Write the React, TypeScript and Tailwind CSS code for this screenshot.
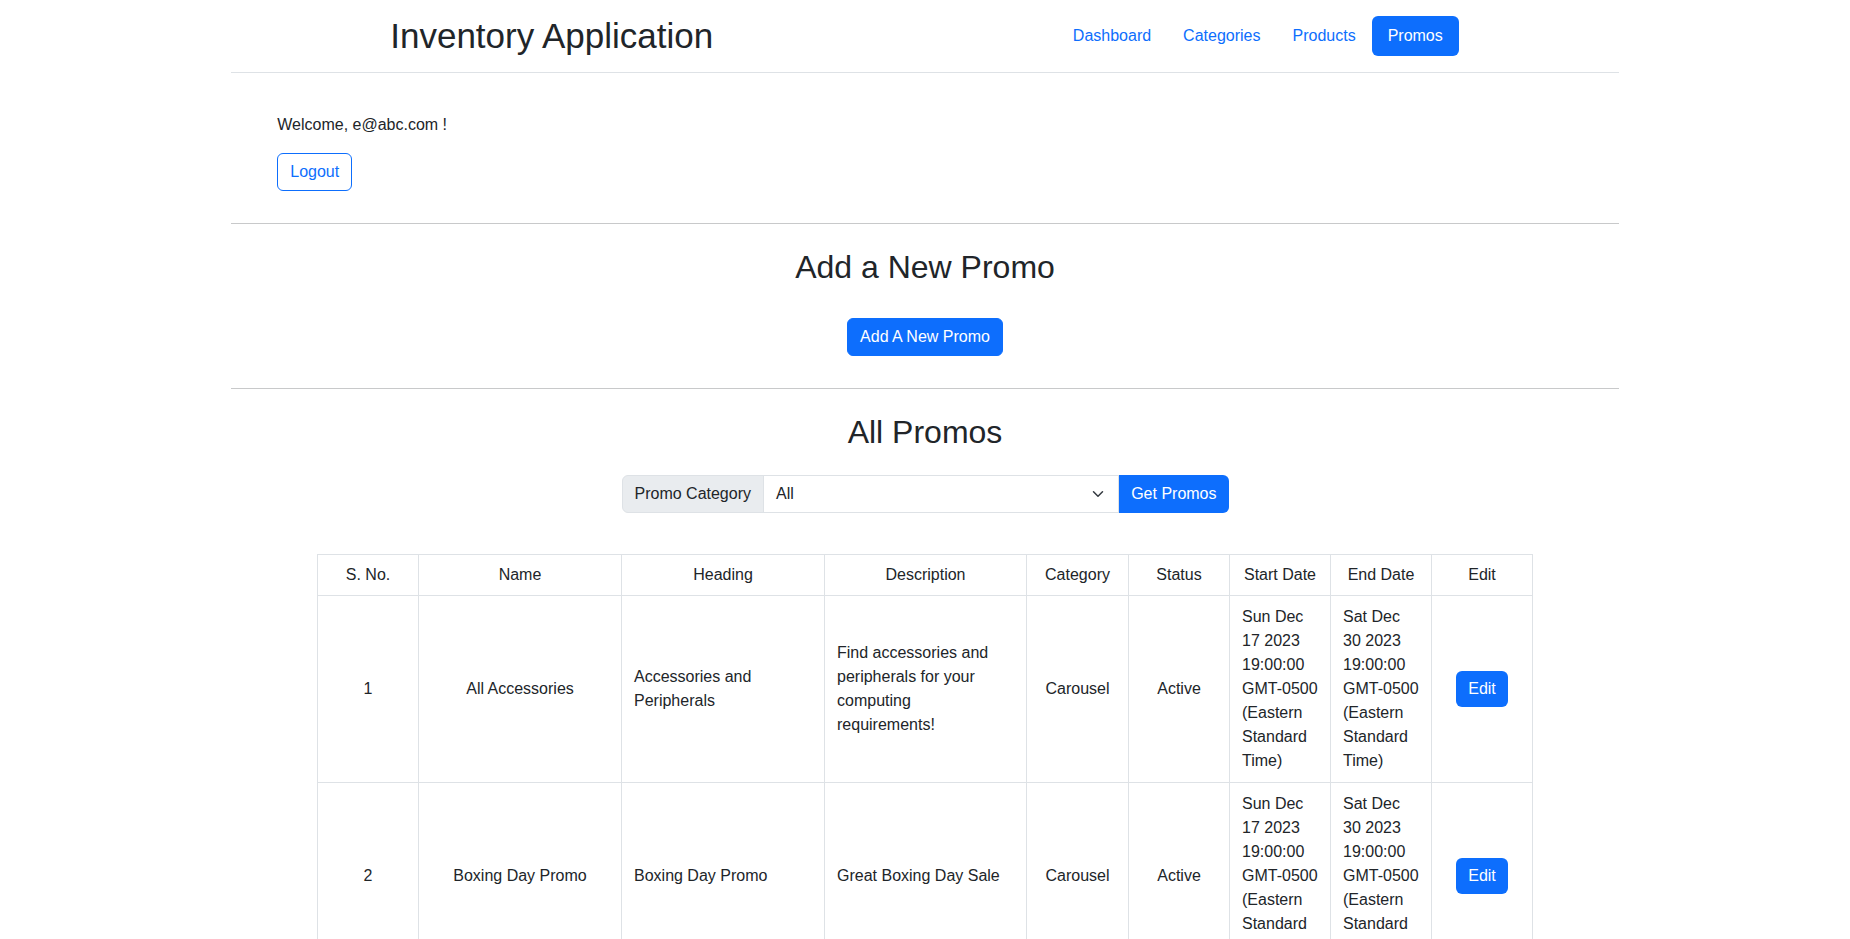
const NAV_LINKS = ["Dashboard", "Categories", "Products", "Promos"];

type Promo = {
  id: number;
  name: string;
  heading: string[];
  description: string[];
  category: string;
  status: string;
  start: string[];
  end: string[];
};

const PROMOS: Promo[] = [
  {
    id: 1,
    name: "All Accessories",
    heading: ["Accessories and", "Peripherals"],
    description: ["Find accessories and", "peripherals for your", "computing", "requirements!"],
    category: "Carousel",
    status: "Active",
    start: ["Sun Dec", "17 2023", "19:00:00", "GMT-0500", "(Eastern", "Standard", "Time)"],
    end: ["Sat Dec", "30 2023", "19:00:00", "GMT-0500", "(Eastern", "Standard", "Time)"],
  },
  {
    id: 2,
    name: "Boxing Day Promo",
    heading: ["Boxing Day Promo"],
    description: ["Great Boxing Day Sale"],
    category: "Carousel",
    status: "Active",
    start: ["Sun Dec", "17 2023", "19:00:00", "GMT-0500", "(Eastern", "Standard", "Time)"],
    end: ["Sat Dec", "30 2023", "19:00:00", "GMT-0500", "(Eastern", "Standard", "Time)"],
  },
];

const HEADERS = ["S. No.", "Name", "Heading", "Description", "Category", "Status", "Start Date", "End Date", "Edit"];

function Lines({ lines }: { lines: string[] }) {
  return (
    <>
      {lines.map((l, i) => (
        <span key={i} className="block whitespace-nowrap">
          {l}
        </span>
      ))}
    </>
  );
}

function Header() {
  return (
    <header className="flex items-center justify-between border-b border-[#dee2e6] py-4 pl-[159px] pr-[160px]">
      <h1 className="text-[35px] font-medium leading-[40px]">Inventory Application</h1>
      <nav className="flex">
        {NAV_LINKS.map((link) => (
          <a
            key={link}
            className={`rounded-md px-4 py-2 leading-6 ${
              link === "Promos" ? "bg-[#0d6efd] text-white" : "text-[#0d6efd]"
            }`}
          >
            {link}
          </a>
        ))}
      </nav>
    </header>
  );
}

function Divider() {
  return <div className="h-px bg-[#c8c9ca]" />;
}

function PromoRow({ promo }: { promo: Promo }) {
  const cell = "border border-[#dee2e6] px-3 py-[9px] align-middle";
  return (
    <tr>
      <td className={`${cell} text-center`}>{promo.id}</td>
      <td className={`${cell} text-center`}>{promo.name}</td>
      <td className={cell}>
        <Lines lines={promo.heading} />
      </td>
      <td className={cell}>
        <Lines lines={promo.description} />
      </td>
      <td className={`${cell} text-center`}>{promo.category}</td>
      <td className={`${cell} text-center`}>{promo.status}</td>
      <td className={cell}>
        <Lines lines={promo.start} />
      </td>
      <td className={cell}>
        <Lines lines={promo.end} />
      </td>
      <td className={`${cell} text-center`}>
        <button className="rounded-md bg-[#0d6efd] px-3 py-1.5 leading-6 text-white">Edit</button>
      </td>
    </tr>
  );
}

export default function App() {
  return (
    <div className="mx-auto w-3/4 bg-white font-['Liberation_Sans',Arial,sans-serif] text-base leading-6 text-[#212529]">
      <Header />

      <section className="pb-[32px] pl-[46px] pt-[40px]">
        <p className="mb-4">Welcome, e@abc.com !</p>
        <button className="rounded-md border border-[#0d6efd] px-3 py-1.5 leading-6 text-[#0d6efd]">Logout</button>
      </section>

      <Divider />

      <section className="flex flex-col items-center pb-8 pt-6">
        <h2 className="text-[32px] font-medium leading-[38px]">Add a New Promo</h2>
        <button className="mt-8 rounded-md border border-[#0d6efd] bg-[#0d6efd] px-3 py-1.5 leading-6 text-white">
          Add A New Promo
        </button>
      </section>

      <Divider />

      <section className="flex flex-col items-center pb-10 pt-6">
        <h2 className="text-[32px] font-medium leading-[38px]">All Promos</h2>

        <div className="mt-6 flex h-[38px] w-[607px]">
          <span className="flex items-center rounded-l-md border border-[#dee2e6] bg-[#e9ecef] px-3">Promo Category</span>
          <div className="-ml-px flex flex-1 items-center justify-between border border-[#dee2e6] bg-white pl-3 pr-3">
            <span>All</span>
            <svg width="16" height="12" viewBox="0 0 16 16" fill="none">
              <path d="m2 5 6 6 6-6" stroke="#343a40" strokeWidth="2" strokeLinecap="round" strokeLinejoin="round" />
            </svg>
          </div>
          <button className="rounded-r-md bg-[#0d6efd] px-3 text-white">Get Promos</button>
        </div>

        <table className="mt-[41px] w-[1215px] table-fixed border-collapse">
          <colgroup>
            <col className="w-[101px]" />
            <col className="w-[203px]" />
            <col className="w-[203px]" />
            <col className="w-[202px]" />
            <col className="w-[102px]" />
            <col className="w-[101px]" />
            <col className="w-[101px]" />
            <col className="w-[101px]" />
            <col className="w-[101px]" />
          </colgroup>
          <thead>
            <tr>
              {HEADERS.map((h) => (
                <th key={h} className="border border-[#dee2e6] px-2 py-2 text-center font-normal">
                  {h}
                </th>
              ))}
            </tr>
          </thead>
          <tbody>
            {PROMOS.map((p) => (
              <PromoRow key={p.id} promo={p} />
            ))}
          </tbody>
        </table>
      </section>
    </div>
  );
}
